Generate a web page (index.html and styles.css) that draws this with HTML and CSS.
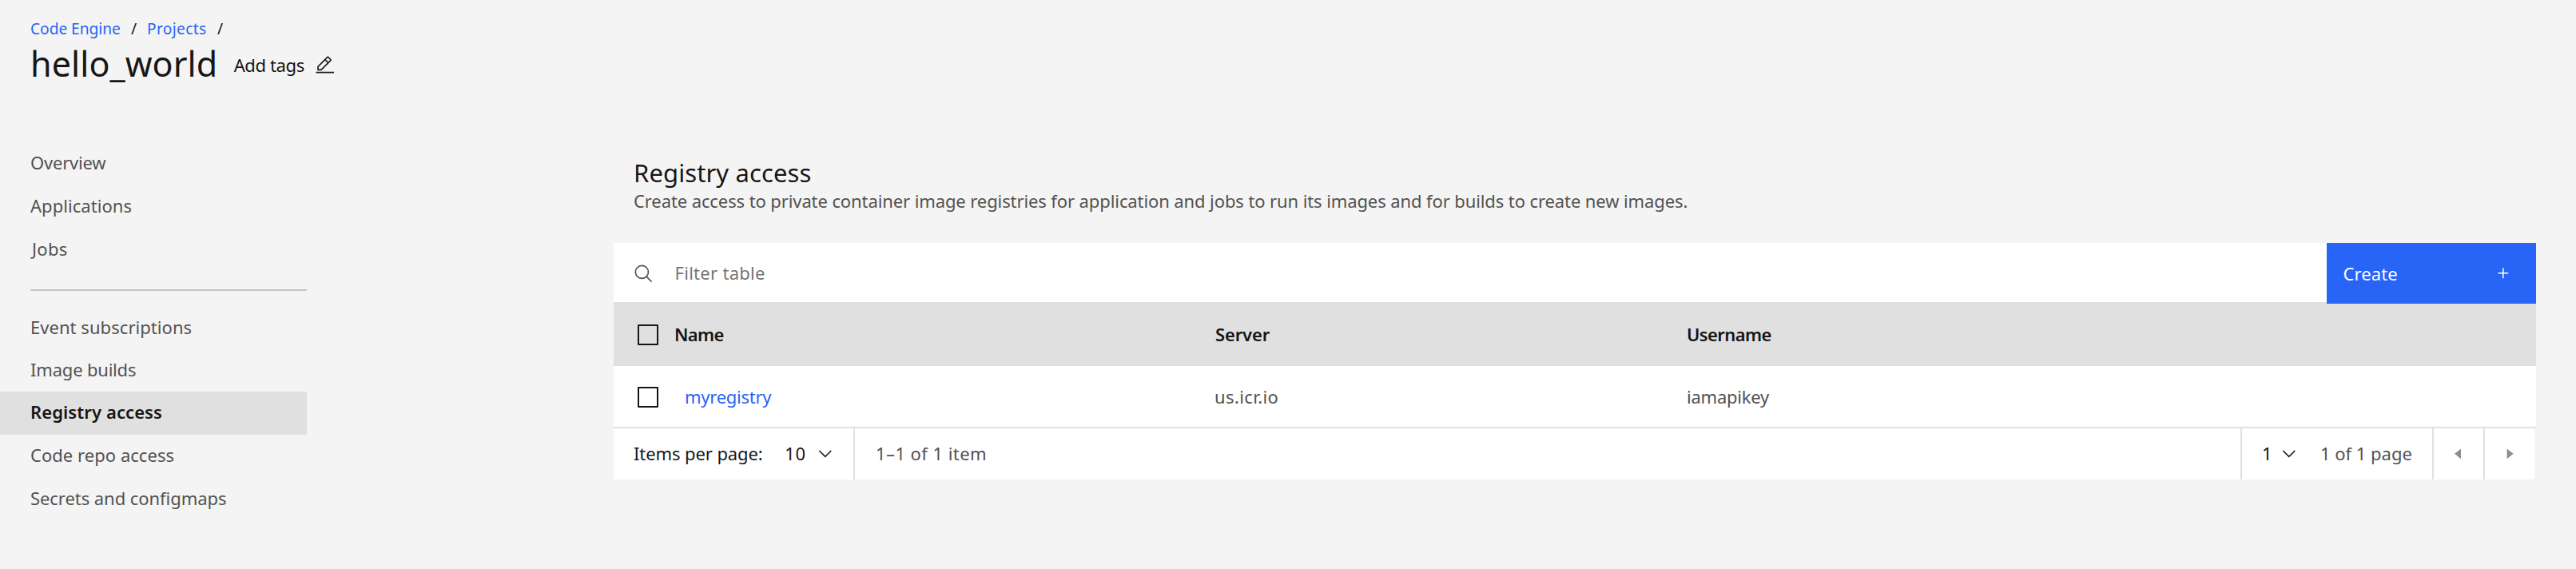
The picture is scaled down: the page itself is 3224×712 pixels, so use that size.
FILE: index.html
```
<!DOCTYPE html>
<html lang="en">
<head>
<meta charset="utf-8">
<title>hello_world – Registry access</title>
<link rel="stylesheet" href="styles.css">
</head>
<body>
<header class="page-header">
  <nav class="breadcrumb">
    <a class="crumb-engine" href="#">Code Engine</a><span class="slash">/</span><a class="crumb-projects" href="#">Projects</a><span class="slash">/</span>
  </nav>
  <div class="title-row">
    <h1>hello_world</h1>
    <span class="add-tags">Add tags</span>
    <svg class="icon edit-icon" viewBox="0 0 32 32"><path d="M2 26H30V28H2zM25.4 9c.8-.8.8-2 0-2.8l-3.6-3.6c-.8-.8-2-.8-2.8 0l-15 15V24h6.4L25.4 9zM20.4 4L24 7.6l-3 3L17.4 7 20.4 4zM6 22v-3.6l10-10 3.6 3.6-10 10H6z"/></svg>
  </div>
</header>
<div class="layout">
  <nav class="sidebar">
    <a class="nav-overview" href="#">Overview</a>
    <a class="nav-apps" href="#">Applications</a>
    <a class="nav-jobs" href="#">Jobs</a>
    <hr>
    <a class="nav-events" href="#">Event subscriptions</a>
    <a class="nav-builds" href="#">Image builds</a>
    <a class="nav-registry selected" href="#">Registry access</a>
    <a class="nav-repo" href="#">Code repo access</a>
    <a class="nav-secrets" href="#">Secrets and configmaps</a>
  </nav>
  <main class="content">
    <h2>Registry access</h2>
    <p class="description">Create access to private container image registries for application and jobs to run its images and for builds to create new images.</p>
    <section class="table">
      <div class="toolbar">
        <svg class="icon search-icon" viewBox="0 0 32 32"><path d="M29,27.5859l-7.5521-7.5521a11.0177,11.0177,0,1,0-1.4141,1.4141L27.5859,29ZM4,13a9,9,0,1,1,9,9A9.01,9.01,0,0,1,4,13Z"/></svg>
        <span class="filter">Filter table</span>
        <button class="create" type="button"><span>Create</span><svg class="icon" viewBox="0 0 32 32"><path d="M17 15V8h-2v7H8v2h7v7h2v-7h7v-2z"/></svg></button>
      </div>
      <div class="row head">
        <span class="check"></span><span class="name">Name</span><span class="server">Server</span><span class="user">Username</span>
      </div>
      <div class="row body">
        <span class="check"></span><a class="name" href="#">myregistry</a><span class="server">us.icr.io</span><span class="user">iamapikey</span>
      </div>
      <div class="pagination">
        <div class="page-size">
          <span class="per-page">Items per page:</span><span class="size-value">10</span><svg class="icon" viewBox="0 0 16 16"><path d="M8 11L3 6 3.7 5.3 8 9.6 12.3 5.3 13 6z"/></svg>
        </div>
        <span class="range">1–1 of 1 item</span>
        <div class="page-select">
          <span class="page-value">1</span><svg class="icon" viewBox="0 0 16 16"><path d="M8 11L3 6 3.7 5.3 8 9.6 12.3 5.3 13 6z"/></svg><span class="page-count">1 of 1 page</span>
        </div>
        <div class="page-step"><svg class="icon" viewBox="0 0 32 32"><path d="M20 24L10 16 20 8z"/></svg></div>
        <div class="page-step next"><svg class="icon" viewBox="0 0 32 32"><path d="M12 8L22 16 12 24z"/></svg></div>
      </div>
    </section>
  </main>
</div>
</body>
</html>
```
FILE: styles.css
```
* { box-sizing: border-box; }

body {
  margin: 0;
  height: 712px;
  background: #f4f4f4;
  color: #161616;
  font: 400 22px/50px "Noto Sans", sans-serif;
  white-space: nowrap;
}

a { color: #2864f6; text-decoration: none; }
h1, h2, p { margin: 0; font-weight: 400; }

.icon { width: 25.6px; height: 25.6px; flex: none; fill: currentColor; display: block; }

.page-header { height: 178px; padding: 20px 0 0 38px; }
.breadcrumb { display: flex; height: 32px; font-size: 19.2px; line-height: 31px; }
.crumb-engine { width: 126px; letter-spacing: -0.05px; }
.slash { width: 20px; }
.crumb-projects { width: 88px; letter-spacing: 0.33px; }

.title-row { display: flex; height: 56px; }
.title-row h1 { width: 254.7px; font-size: 43px; line-height: 55px; letter-spacing: 0.1px; }
.add-tags { width: 101.3px; line-height: 59px; letter-spacing: -0.38px; }
.edit-icon { margin-top: 16.8px; }

.layout { display: flex; }

.sidebar { display: flex; flex-direction: column; width: 384px; }
.sidebar a { height: 54px; padding-left: 38px; color: #525252; }
.sidebar hr { height: 2px; margin: 22px 0 20px 38px; border: 0; background: #c6c6c6; }
.sidebar .selected { background: #e0e0e0; color: #161616; font-weight: 600; }
.nav-overview { letter-spacing: -0.2px; }
.nav-apps { letter-spacing: 0.05px; }
.sidebar .nav-jobs { padding-left: 40px; letter-spacing: 0.3px; }
.nav-events { letter-spacing: 0.05px; }
.sidebar .nav-builds { height: 52px; line-height: 48px; letter-spacing: -0.19px; }
.nav-registry { letter-spacing: 0.09px; }
.nav-repo { letter-spacing: 0.04px; }
.nav-secrets { letter-spacing: -0.06px; }

.content { width: 2406px; margin-left: 384px; padding-top: 18px; }
.content h2 { padding-left: 25px; font-size: 31px; line-height: 40px; letter-spacing: 0.1px; }
.description { height: 68px; padding-left: 25px; color: #525252; line-height: 30px; letter-spacing: -0.1px; }

.toolbar { display: flex; height: 74px; padding-left: 25.4px; background: #fff; line-height: 75px; }
.search-icon { margin-top: 25.5px; color: #525252; }
.filter { flex: 1; padding-left: 25.5px; color: #757575; letter-spacing: 0.29px; }
.create {
  display: flex;
  justify-content: space-between;
  align-items: center;
  width: 262px;
  height: 76px;
  padding: 0 28px 0 20.5px;
  border: 0;
  background: #2864f6;
  color: #fff;
  font: inherit;
  letter-spacing: 0.09px;
}

.row { display: flex; align-items: center; background: #fff; }
.head { height: 80px; background: #e0e0e0; font-weight: 600; line-height: 79px; }
.body { height: 78px; border-bottom: 2px solid #e0e0e0; color: #525252; line-height: 75px; }
.check { width: 26px; height: 26px; margin: 0 20px 0 30px; border: 2px solid #161616; border-radius: 1px; }
.head .check,
.body .check { margin-top: 2px; }
.name { width: 676px; letter-spacing: -0.61px; }
.body .name { padding-left: 13px; letter-spacing: -0.25px; }
.server { width: 591px; padding-left: 1px; letter-spacing: -0.14px; }
.body .server { padding-left: 0; letter-spacing: 0.39px; }
.user { letter-spacing: -0.6px; }
.body .user { letter-spacing: -0.23px; }

.pagination { display: flex; width: 2404px; height: 64px; background: #fff; line-height: 63px; }
.page-size { display: flex; width: 302px; padding-left: 25px; border-right: 2px solid #e0e0e0; }
.pagination .icon { margin-top: 19px; }
.per-page { width: 189.2px; letter-spacing: -0.1px; }
.size-value { width: 37.4px; letter-spacing: 0.8px; }
.range { flex: 1; padding-left: 26px; color: #525252; letter-spacing: 0.43px; }
.page-select { display: flex; width: 242px; padding-left: 25px; border: solid #e0e0e0; border-width: 0 2px; }
.page-value { width: 21px; }
.page-count { padding-left: 26.5px; color: #525252; letter-spacing: -0.03px; }
.page-step { width: 64px; padding-left: 17.5px; border-right: 2px solid #e0e0e0; color: #8d8d8d; }
.page-step.next { width: 62px; border: 0; }
```
